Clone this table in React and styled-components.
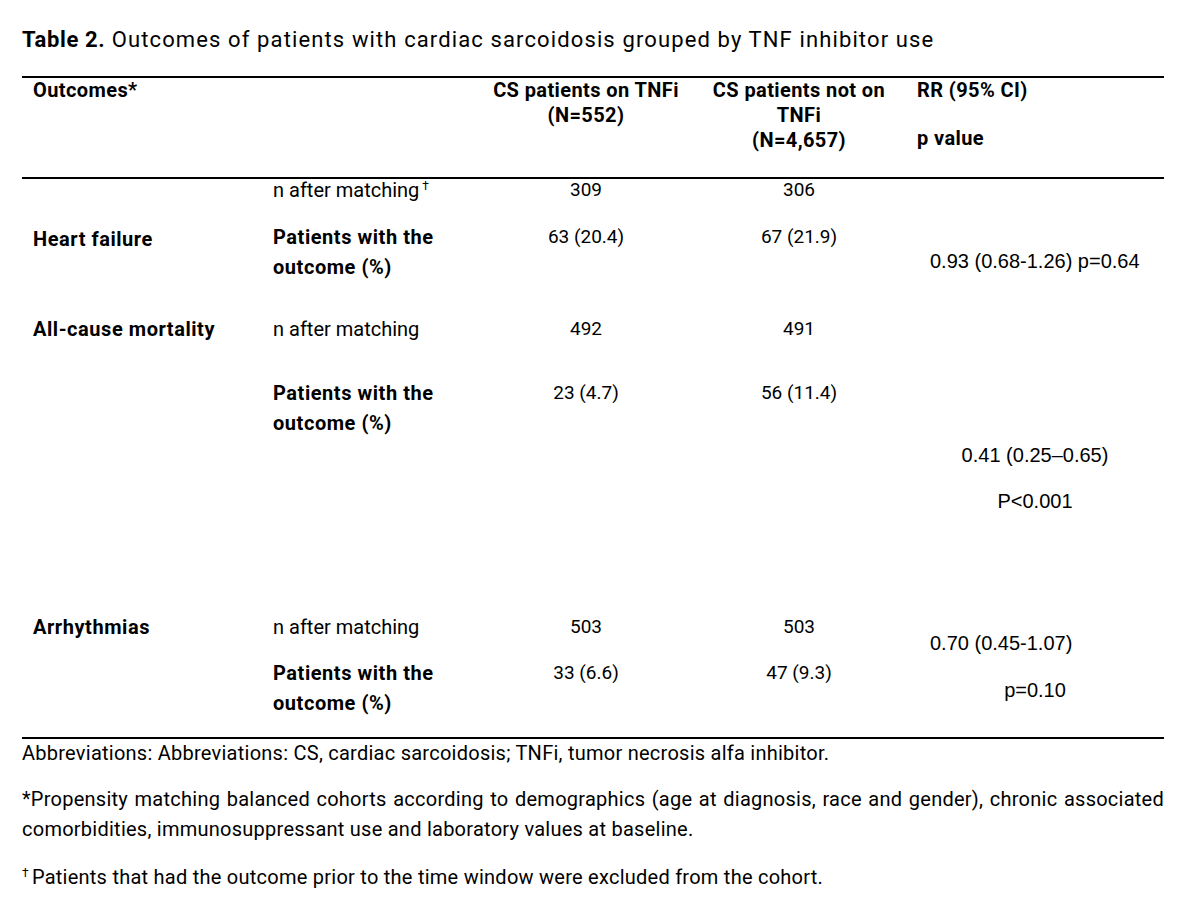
import styled, { createGlobalStyle } from "styled-components";

const GlobalStyle = createGlobalStyle`
  html, body {
    margin: 0;
    padding: 0;
    background: #ffffff;
  }
  body {
    font-family: Roboto, "Liberation Sans", sans-serif;
    color: #000;
  }
`;

const COLUMNS = "240px 218px 212px 214px 258px";

const Page = styled.div`
  width: 1142px;
  padding: 25px 17px 0 22px;
`;

const Title = styled.h1`
  margin: 0 0 21px;
  font-size: 22px;
  line-height: 30px;
  font-weight: 400;
  letter-spacing: 1.12px;

  strong {
    font-weight: 700;
    letter-spacing: 0.6px;
  }
`;

const Table = styled.section`
  border-top: 2px solid #000;
  border-bottom: 2px solid #000;
`;

const HeaderRow = styled.div`
  display: grid;
  grid-template-columns: ${COLUMNS};
  height: 99px;
  border-bottom: 2px solid #000;
  font-size: 20px;
  line-height: 25px;
  font-weight: 700;
  letter-spacing: 0.4px;
`;

const HeadCell = styled.div`
  text-align: ${(p) => (p.$center ? "center" : "left")};
  padding-left: ${(p) => (p.$center ? 0 : 11)}px;
`;

const SubHead = styled.div`
  margin-top: 23px;
`;

const Body = styled.div`
  display: grid;
  grid-template-columns: ${COLUMNS};
  grid-template-rows: 43px 92px 64px 62px 172px 46px 79px;
  font-size: 20px;
  line-height: 30px;
`;

const Cell = styled.div`
  grid-column: ${(p) => p.$col};
  grid-row: ${(p) => p.$row};
  line-height: ${(p) => (p.$tight ? 22 : 30)}px;
  padding-top: ${(p) => p.$top || 0}px;
`;

const Outcome = styled(Cell)`
  padding-left: 11px;
  font-weight: 700;
  letter-spacing: 0.55px;
`;

const Measure = styled(Cell)`
  padding-left: 11px;
  font-weight: ${(p) => (p.$bold ? 700 : 400)};
  letter-spacing: ${(p) => (p.$bold ? 0.55 : 0)}px;
`;

const Value = styled(Cell)`
  text-align: center;
  font-size: 19px;
`;

const Ratio = styled(Cell)`
  font-family: "Liberation Sans", Arial, sans-serif;
  font-size: 20px;
`;

const RatioLine = styled.div`
  text-align: ${(p) => (p.$center ? "center" : "left")};
  padding-left: ${(p) => (p.$center ? 0 : 24)}px;
  margin-top: ${(p) => p.$gap || 0}px;
`;

const Dagger = styled.sup`
  font-size: 12px;
  line-height: 0;
  vertical-align: 7px;
  margin-left: 3px;
`;

const Notes = styled.div`
  font-size: 20px;
  letter-spacing: 0.25px;
`;

const Note = styled.p`
  margin: ${(p) => p.$gap || 0}px 0 0;
  line-height: ${(p) => p.$lh || 30}px;
  text-align: justify;

  sup {
    font-size: 12px;
    line-height: 0;
    vertical-align: 7px;
    margin-right: 3px;
  }
`;

const PatientsWith = ({ row }) => (
  <Measure $col={2} $row={row} $bold>
    Patients with the
    <br />
    outcome (%)
  </Measure>
);

export default function App() {
  return (
    <>
      <GlobalStyle />
      <Page>
        <Title>
          <strong>Table 2.</strong> Outcomes of patients with cardiac
          sarcoidosis grouped by TNF inhibitor use
        </Title>
        <Table>
          <HeaderRow>
            <HeadCell>Outcomes*</HeadCell>
            <HeadCell />
            <HeadCell $center>
              CS patients on TNFi
              <br />
              (N=552)
            </HeadCell>
            <HeadCell $center>
              CS patients not on
              <br />
              TNFi
              <br />
              (N=4,657)
            </HeadCell>
            <HeadCell>
              RR (95% CI)
              <SubHead>p value</SubHead>
            </HeadCell>
          </HeaderRow>

          <Body>
            {/* Heart failure */}
            <Measure $col={2} $row={1} $tight>
              n after matching<Dagger>†</Dagger>
            </Measure>
            <Value $col={3} $row={1} $tight>309</Value>
            <Value $col={4} $row={1} $tight>306</Value>
            <Outcome $col={1} $row={2} $top={2}>Heart failure</Outcome>
            <PatientsWith row={2} />
            <Value $col={3} $row={2}>63 (20.4)</Value>
            <Value $col={4} $row={2}>67 (21.9)</Value>
            <Ratio $col={5} $row={2} $top={24}>
              <RatioLine>0.93 (0.68-1.26) p=0.64</RatioLine>
            </Ratio>

            {/* All-cause mortality */}
            <Outcome $col={1} $row={3}>All-cause mortality</Outcome>
            <Measure $col={2} $row={3}>n after matching</Measure>
            <Value $col={3} $row={3}>492</Value>
            <Value $col={4} $row={3}>491</Value>
            <PatientsWith row={4} />
            <Value $col={3} $row={4}>23 (4.7)</Value>
            <Value $col={4} $row={4}>56 (11.4)</Value>
            <Ratio $col={5} $row={5}>
              <RatioLine $center>0.41 (0.25–0.65)</RatioLine>
              <RatioLine $center $gap={16}>P&lt;0.001</RatioLine>
            </Ratio>

            {/* Arrhythmias */}
            <Outcome $col={1} $row={6}>Arrhythmias</Outcome>
            <Measure $col={2} $row={6}>n after matching</Measure>
            <Value $col={3} $row={6}>503</Value>
            <Value $col={4} $row={6}>503</Value>
            <PatientsWith row={7} />
            <Value $col={3} $row={7}>33 (6.6)</Value>
            <Value $col={4} $row={7}>47 (9.3)</Value>
            <Ratio $col={5} $row="6 / span 2" $top={16}>
              <RatioLine>0.70 (0.45-1.07)</RatioLine>
              <RatioLine $center $gap={17}>p=0.10</RatioLine>
            </Ratio>
          </Body>
        </Table>

        <Notes>
          <Note $lh={28}>
            Abbreviations: Abbreviations: CS, cardiac sarcoidosis; TNFi, tumor
            necrosis alfa inhibitor.
          </Note>
          <Note $gap={17}>
            *Propensity matching balanced cohorts according to demographics
            (age at diagnosis, race and gender), chronic associated
            comorbidities, immunosuppressant use and laboratory values at
            baseline.
          </Note>
          <Note $gap={18}>
            <sup>†</sup>Patients that had the outcome prior to the time window
            were excluded from the cohort.
          </Note>
        </Notes>
      </Page>
    </>
  );
}
